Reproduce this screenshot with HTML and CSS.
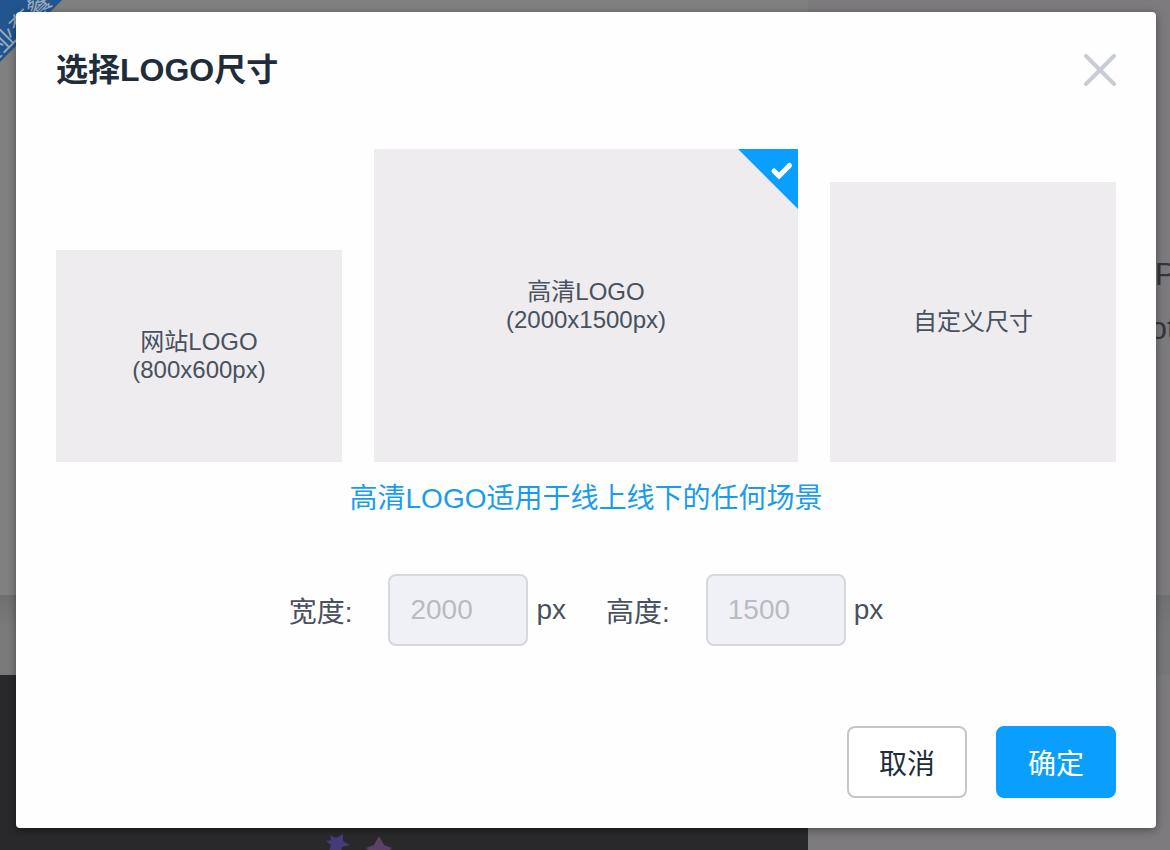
FILE: index.html
```html
<!DOCTYPE html>
<html lang="zh-CN">
<head>
<meta charset="utf-8">
<meta name="viewport" content="width=device-width, initial-scale=1">
<title>选择LOGO尺寸</title>
<link rel="stylesheet" href="styles.css">
</head>
<body>
<div class="page" aria-hidden="true">
  <div class="canvas">
    <div class="canvas-top"></div>
    <div class="canvas-bar"></div>
    <div class="canvas-dark">
      <svg class="stars" width="70" height="17" viewBox="0 0 70 17">
        <path fill="#443b78" d="M4 2l6 3 7-4v7l7 4-8 2-1 5H3l2-7-5-4 5-1z"/>
        <path fill="#5b4068" d="M53 3l5 9 8 3-5 4H45l-5-4 8-3z"/>
      </svg>
    </div>
  </div>
  <div class="side"><div class="side-bar"></div></div>
  <span class="ribbon">企业套餐</span>
  <span class="side-text">P<br>ot</span>
</div>

<div class="overlay">
  <form class="dialog" role="dialog" aria-labelledby="dialog-title">
    <header class="dialog-header">
      <h1 class="dialog-title" id="dialog-title">选择LOGO尺寸</h1>
      <button class="close" type="button" aria-label="关闭">
        <svg width="32" height="32" viewBox="0 0 32 32" fill="none" stroke="#c8ccd3" stroke-width="4" stroke-linecap="round"><path d="M2 2l28 28M30 2L2 30"/></svg>
      </button>
    </header>

    <div class="options" role="radiogroup" aria-labelledby="dialog-title">
      <label class="option option-web">
        <input class="option-input" type="radio" name="size">
        <span>网站LOGO<br>(800x600px)</span>
      </label>
      <label class="option option-hd">
        <input class="option-input" type="radio" name="size" checked>
        <span>高清LOGO<br>(2000x1500px)</span>
        <svg class="option-mark" width="60" height="60" viewBox="0 0 60 60">
          <path fill="#0a9fff" d="M0 0h60v60z"/>
          <path fill="none" stroke="#fff" stroke-width="5" stroke-linecap="round" d="M36 22l5 5 10.500-10.500"/>
        </svg>
      </label>
      <label class="option option-custom">
        <input class="option-input" type="radio" name="size">
        <span>自定义尺寸</span>
      </label>
    </div>

    <p class="hint">高清LOGO适用于线上线下的任何场景</p>

    <div class="fields">
      <div class="field">
        <label class="field-label" for="width">宽度:</label>
        <input class="field-input" id="width" type="text" value="2000" disabled>
        <span>px</span>
      </div>
      <div class="field">
        <label class="field-label" for="height">高度:</label>
        <input class="field-input" id="height" type="text" value="1500" disabled>
        <span>px</span>
      </div>
    </div>

    <footer class="actions">
      <button class="button" type="button">取消</button>
      <button class="button button-primary" type="submit">确定</button>
    </footer>
  </form>
</div>
</body>
</html>
```
FILE: styles.css
```css
* {
  box-sizing: border-box;
}

body {
  margin: 0;
  min-height: 100vh;
  display: grid;
  font-family: "Liberation Sans", "Noto Sans CJK SC", sans-serif;
  color: #48515d;
}

button,
input {
  font-family: inherit;
}

/* Dimmed page behind the dialog */
.page {
  grid-area: 1 / 1;
  position: relative;
  overflow: hidden;
  display: grid;
  grid-template-columns: 808fr 362fr;
}

.canvas {
  display: grid;
  grid-template-rows: 595fr 80fr 175fr;
}

.canvas-top {
  background: #808080;
}

.canvas-bar {
  background: linear-gradient(#6f6f70, #7a7a7b 32px);
}

.canvas-dark {
  display: flex;
  align-items: flex-end;
  padding-left: 326px;
  background: #29282a;
}

.side {
  display: grid;
  grid-template-rows: 595fr 80fr 175fr;
  background: #7c7a7d;
}

.side-bar {
  grid-row: 2;
  background: linear-gradient(#707072, #777779 32px);
}

.ribbon {
  position: absolute;
  top: 2px;
  left: -73px;
  width: 160px;
  padding-top: 20px;
  background: #205590;
  color: #9dabb9;
  font-size: 24px;
  line-height: 24px;
  text-align: center;
  transform: rotate(-45deg);
}

.side-text {
  position: absolute;
  top: 247px;
  right: -6px;
  color: #363537;
  font-size: 32px;
  line-height: 54px;
  text-align: right;
}

/* Dialog */
.overlay {
  grid-area: 1 / 1;
  position: relative;
  padding: 12px 14px 22px 16px;
  display: grid;
}

.dialog {
  display: flex;
  flex-direction: column;
  padding: 34px 40px 30px;
  background: #fefefe;
  border-radius: 4px;
  box-shadow: 0 2px 8px rgba(0, 0, 0, 0.4);
}

.dialog-header {
  display: flex;
  align-items: center;
  justify-content: space-between;
}

.dialog-title {
  margin: 0;
  color: #1f2d3a;
  font-size: 32px;
  line-height: 48px;
}

.close {
  display: flex;
  padding: 0;
  border: 0;
  background: none;
}

.options {
  display: grid;
  grid-template-columns: 143fr 212fr 143fr;
  align-items: end;
  gap: 32px;
  margin-top: 55px;
}

.option {
  position: relative;
  display: flex;
  align-items: center;
  justify-content: center;
  background: #eeecef;
  font-size: 24px;
  line-height: 28px;
  text-align: center;
}

.option-web {
  min-height: 212px;
}

.option-hd {
  min-height: 313px;
}

.option-custom {
  min-height: 280px;
}

.option-input {
  position: absolute;
  inset: 0;
  margin: 0;
  opacity: 0;
}

.option-mark {
  position: absolute;
  top: 0;
  right: 0;
}

.hint {
  margin: 17px 0 0;
  color: #1a9cee;
  font-size: 28px;
  line-height: 40px;
  text-align: center;
}

.fields {
  display: flex;
  justify-content: center;
  gap: 40px;
  margin-top: 55px;
  font-size: 28px;
}

.field {
  display: flex;
  align-items: center;
  gap: 8px;
}

.field-label {
  margin-right: 28px;
}

.field-input {
  width: 140px;
  height: 72px;
  padding: 0 20px;
  border: 2px solid #d6d8de;
  border-radius: 8px;
  background: #eff1f6;
  color: #b8bbc0;
  font-size: 28px;
}

.actions {
  display: flex;
  justify-content: flex-end;
  gap: 29px;
  margin-top: auto;
}

.button {
  width: 120px;
  height: 72px;
  padding: 0;
  border: 2px solid #c6c6c9;
  border-radius: 8px;
  background: #fff;
  color: #1f2d3a;
  font-size: 28px;
}

.button-primary {
  border-color: #0a9fff;
  background: #0a9fff;
  color: #fff;
}
```
